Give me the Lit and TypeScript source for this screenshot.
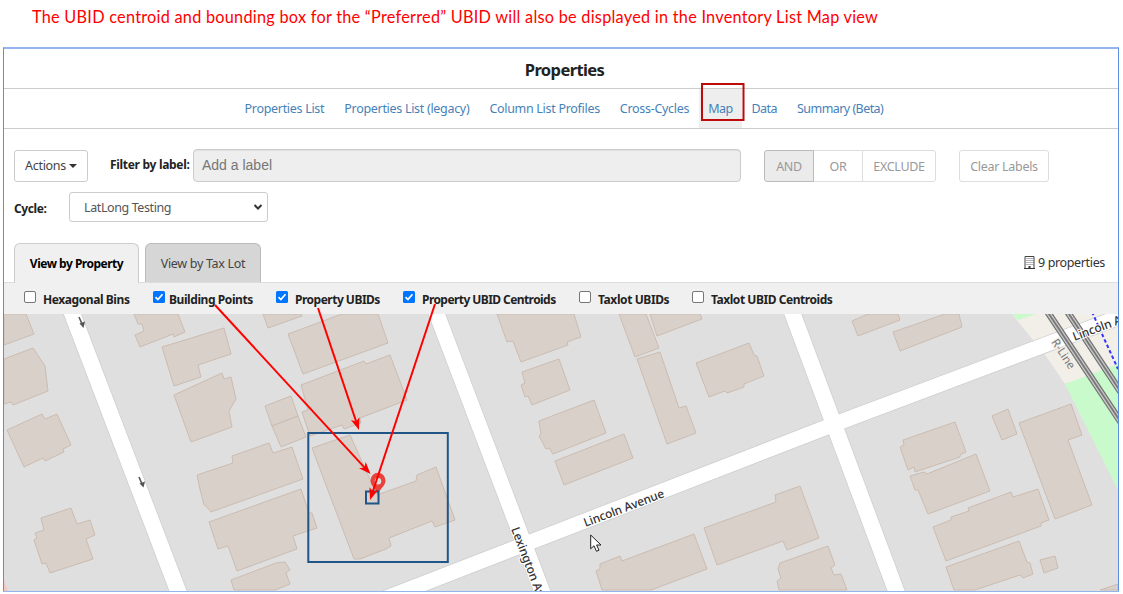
import { LitElement, html, css, svg } from "lit";
import { customElement } from "lit/decorators.js";

const BUILDINGS = [
  "4,345 34,334 26,314 4,314",
  "4,359 33,348 45,366 48,391 13,405 11,402 4,404",
  "7,430 42,414 45,419 57,414 71,445 63,449 64,452 45,461 43,458 24,467",
  "41,518 71,508 77,524 90,520 95,535 86,539 93,559 50,573 46,563 42,564 34,540 37,538 35,533 44,530",
  "134,314 138,324 142,324 144,331 135,335 140,347 173,334 174,337 185,332 178,314",
  "162,347 224,328 231,354 198,365 201,377 174,386",
  "174,395 222,373 224,379 231,377 236,399 229,411 232,427 191,442",
  "263,314 268,328 302,316 301,314",
  "288,334 342,314 378,314 388,343 303,374",
  "265,406 291,396 298,416 272,426",
  "272,426 298,416 306,437 281,447",
  "301,385 364,361 366,364 390,355 407,400 360,418 361,423 344,429 342,425 310,436 302,412 308,410",
  "197,475 233,463 232,456 269,443 273,453 292,447 303,479 211,512 206,506 204,505 199,485",
  "209,522 301,489 309,513 312,513 317,528 293,536 297,549 237,571 228,546 218,549",
  "231,580 276,563 285,562 290,570 286,573 290,584 275,590 234,590",
  "312,448 350,435 377,495 416,481 417,475 436,467 455,520 435,527 432,521 389,538 391,546 386,549 360,559 354,559",
  "497,314 507,342 513,341 521,362 568,345 567,342 581,337 574,314",
  "522,372 559,359 570,390 532,405 528,396 525,397 521,385 525,383",
  "539,421 594,400 606,433 553,454 549,448 546,449 539,436 541,434",
  "555,461 624,434 633,458 564,485",
  "619,314 635,357 659,348 646,314",
  "650,314 657,336 702,319 700,314",
  "637,359 660,352 679,408 686,406 696,433 667,444",
  "696,363 749,343 754,355 757,356 764,376 744,384 744,387 727,393 725,391 709,397",
  "852,321 868,314 898,314 900,320 858,336",
  "893,332 945,314 959,314 962,327 900,351",
  "596,571 600,569 600,564 620,556 622,561 694,534 707,569 651,590 602,590",
  "704,528 776,502 775,495 800,486 819,538 787,550 783,541 717,565",
  "780,563 828,546 835,565 831,568 834,575 841,574 847,590 779,590 777,581 781,578 778,569",
  "903,440 955,422 966,452 960,455 960,457 915,472 914,467 908,470 900,447 904,445",
  "910,476 924,472 927,474 976,454 990,491 928,514 918,490 915,490",
  "992,416 1008,409 1017,434 1002,440",
  "1019,423 1071,404 1082,435 1068,440 1092,505 1055,519",
  "933,527 951,520 951,517 969,511 968,508 1011,492 1013,497 1038,489 1049,520 1041,523 1041,526 946,561",
  "946,567 1019,541 1027,562 1030,563 1033,574 1023,578 1020,575 975,590 954,590",
  "1040,560 1055,556 1058,568 1044,573",
  "1100,590 1118,584 1118,590",
];

const TABS = ["Properties List", "Properties List (legacy)", "Column List Profiles", "Cross-Cycles", "Map", "Data", "Summary (Beta)"];

const LAYERS = [
  { label: "Hexagonal Bins", on: false, cls: "l0" },
  { label: "Building Points", on: true, cls: "l1" },
  { label: "Property UBIDs", on: true, cls: "l2" },
  { label: "Property UBID Centroids", on: true, cls: "l3" },
  { label: "Taxlot UBIDs", on: false, cls: "l4" },
  { label: "Taxlot UBID Centroids", on: false, cls: "l5" },
];

@customElement("street-map")
class StreetMap extends LitElement {
  static styles = css`
    :host { display: block; height: 277px; }
    svg { display: block; width: 1114px; height: 277px; }
    .land { fill: #dfdfdf; }
    .building { fill: #d9d0c9; stroke: #cbbcb1; stroke-width: 1; }
    .casing { fill: none; stroke: #d0d0d0; }
    .road { fill: none; stroke: #fff; }
    .name { font-family: "Noto Sans", sans-serif; font-size: 12px; font-weight: 500; letter-spacing: -0.1px; fill: #333; stroke: #fff; stroke-width: 2px; paint-order: stroke; }
    .line-name { font-family: "Noto Sans", sans-serif; font-size: 11.5px; letter-spacing: 0; fill: #777; stroke: #f2efe9; stroke-width: 2px; paint-order: stroke; }
    .rail { fill: none; stroke: #707070; stroke-width: 6.8; }
    .rail-gap { fill: none; stroke: #c9c9c9; stroke-width: 4.4; }
    .rail-mid { fill: none; stroke: #777; stroke-width: 1.8; }
    .path { fill: none; stroke: #3434ff; stroke-width: 2; stroke-dasharray: 3.5 2.5; }
    .arrow { stroke: #555; stroke-width: 1.6; fill: #555; }
  `;
  render() {
    const roads = [
      ["M67 300L183 604", 16],
      ["M431.500 300L547 604", 15.5],
      ["M787.500 300L901 604", 16],
      ["M376 602L840 422L1130 313", 15],
    ] as const;
    return html`<svg viewBox="4 314 1114 277">
      <rect class="land" x="4" y="314" width="1114" height="277"></rect>
      <path fill="#f2efe9" d="M1012 314H1118V366L1065 384L1046 356Z"></path>
      <path fill="#c8facc" d="M1012 314H1036L1018 320ZM1065 384L1118 364V490Z"></path>
      <path fill="#f5c6c6" d="M4 580L8 591H4Z"></path>
      ${BUILDINGS.map((p) => svg`<polygon class="building" points=${p}></polygon>`)}
      ${roads.map(([d, w]) => svg`<path class="casing" stroke-width=${w + 1.6} d=${d}></path>`)}
      ${roads.map(([d, w]) => svg`<path class="road" stroke-width=${w} d=${d}></path>`)}
      ${["M1043 305L1122 424", "M1063 305L1122 394"].map((d) => svg`<path class="rail" d=${d}></path><path class="rail-gap" d=${d}></path><path class="rail-mid" d=${d}></path>`)}
      <path class="path" d="M1092 312L1118 369"></path>
      <text class="name" transform="translate(585.500 527) rotate(-20.8)" textLength="85" lengthAdjust="spacingAndGlyphs">Lincoln Avenue</text>
      <text class="name" transform="translate(1074.500 341) rotate(-20.5)">Lincoln A</text>
      <text class="name" transform="translate(511 529) rotate(69)">Lexington Av</text>
      <text class="line-name" transform="translate(1051 342) rotate(57)">R-Line</text>
      <g class="arrow"><path d="M79 317L82 324"></path><path stroke="none" d="M79.500 323.500L85 321.500L83.500 328Z"></path>
      <path d="M139 477L142 484"></path><path stroke="none" d="M139.500 483.500L145 481.500L143.500 487.500Z"></path></g>
    </svg>`;
  }
}

@customElement("annotation-layer")
class AnnotationLayer extends LitElement {
  static styles = css`
    :host { display: block; }
    svg { display: block; }
    .bounds { fill: none; stroke: #1f5587; stroke-width: 2; }
    .ray { stroke: #f00; stroke-width: 2; }
    .head { fill: #f00; }
    .mark { fill: none; stroke: #bd0b0b; stroke-width: 2; }
  `;
  render() {
    const rays = [
      [215, 305, 370.500, 474],
      [318, 308, 359, 430],
      [435, 304, 370, 500],
    ];
    return html`<svg width="1123" height="594" viewBox="0 0 1123 594">
      <rect class="mark" x="702" y="84" width="41.500" height="36"></rect>
      <rect class="bounds" x="308.300" y="433" width="139.500" height="129"></rect>
      <path fill="#e8433a" fill-rule="evenodd" d="M378 494.500C376.500 489 370.500 486 370.500 480.500A7.500 7.700 0 0 1 385.500 480.500C385.500 486 379.500 489 378 494.500ZM378 478A3 3 0 1 0 378 484.500A3 3 0 1 0 378 478Z"></path>
      <rect class="bounds" x="366" y="491.500" width="12.500" height="12"></rect>
      ${rays.map(([x1, y1, x2, y2]) => {
        const a = (Math.atan2(y2 - y1, x2 - x1) * 180) / Math.PI;
        return svg`<line class="ray" x1=${x1} y1=${y1} x2=${x2 - 5 * Math.cos((a * Math.PI) / 180)} y2=${y2 - 5 * Math.sin((a * Math.PI) / 180)}></line>
          <path class="head" transform="translate(${x2} ${y2}) rotate(${a})" d="M0 0L-12 -4.500L-9 0L-12 4.500Z"></path>`;
      })}
      <path fill="#fff" stroke="#222" stroke-width="1" d="M590.700 535V548.800L594 545.800L596.500 551.300L599 550.200L596.600 545H601Z"></path>
    </svg>`;
  }
}

@customElement("app-root")
class AppRoot extends LitElement {
  static styles = css`
    * { box-sizing: border-box; }
    :host { display: block; position: relative; width: 1123px; height: 594px; background: #fff; overflow: hidden; font-family: "Noto Sans", sans-serif; font-size: 12.5px; letter-spacing: -0.3px; color: #222; }
    .note { height: 47px; padding: 7px 0 0 32px; margin: 0; font: 16.3px/20px Lato, sans-serif; letter-spacing: 0.25px; color: #f00; white-space: nowrap; }
    .frame { width: 1116px; margin-left: 3px; height: 545px; border: 1px solid #5b8ee0; border-top: 2px solid #93b4ec; border-bottom: 2px solid #93b4ec; }
    h1 { margin: 0; height: 40px; padding: 2px 0 0 7px; border-bottom: 1px solid #ccc; text-align: center; font-size: 16.5px; line-height: 38px; letter-spacing: -0.6px; }
    .tabs { display: flex; height: 40px; border-bottom: 1px solid #ccc; padding-left: 230.5px; }
    .tabs a { color: #4682b8; padding: 0 10px; line-height: 39px; white-space: nowrap; }
    .tabs .current { background: #eee; padding: 0 9px; }
    .tabs .current, .tabs .current ~ a { letter-spacing: -0.55px; }
    .filters { display: flex; align-items: flex-start; padding: 20px 0 0 10px; height: 63px; }
    .btn { height: 32px; border: 1px solid #ddd; border-radius: 3px; background: #fff; color: #444; line-height: 32px; text-align: center; white-space: nowrap; }
    .actions { width: 74px; margin-top: 1px; display: flex; align-items: center; justify-content: center; gap: 3px; border-color: #ccc; }
    .caret { border: 4px solid transparent; border-top-color: #333; border-bottom: 0; }
    .filter-label { width: 103px; padding: 0 0 0 22px; line-height: 31px; font-weight: 700; font-size: 12px; white-space: nowrap; }
    .input { width: 548px; height: 33px; margin-left: 2px; border: 1px solid #ccc; border-radius: 4px; background: #eee; color: #777; font: 14px/31px "Liberation Sans", sans-serif; letter-spacing: 0; padding-left: 8px; box-shadow: inset 0 1px 1px #0001; }
    .group { display: flex; margin: 1px 0 0 23px; color: #999; }
    .group .btn, .clear { color: #999; }
    .group .btn + .btn { margin-left: -1px; }
    .and { width: 50px; background: #ebebeb; border-color: #bbb; border-radius: 3px 0 0 3px; z-index: 1; }
    .or { width: 50px; border-radius: 0; }
    .exclude { width: 74px; border-radius: 0 3px 3px 0; }
    .clear { width: 90px; margin: 1px 0 0 23px; }
    .cycle { display: flex; height: 51px; padding-left: 10px; }
    .cycle-label { width: 55px; font-weight: 700; font-size: 12px; line-height: 34px; letter-spacing: -0.4px; }
    .select { width: 199px; height: 30px; border: 1px solid #ccc; border-radius: 3px; padding: 0 4px 0 14px; line-height: 33px; display: flex; align-items: center; justify-content: space-between; color: #555; letter-spacing: -0.4px; }
    .views { display: flex; height: 39px; padding-left: 10px; }
    .view { height: 39px; border: 1px solid #ccc; border-bottom: 0; border-radius: 6px 6px 0 0; text-align: center; line-height: 39px; }
    .property { width: 125px; background: #f0f0f0; font-weight: 700; font-size: 12px; height: 40px; color: #000; z-index: 1; letter-spacing: -0.5px; }
    .taxlot { width: 116px; margin-left: 6px; background: #d6d6d6; border-color: #bbb; color: #444; }
    .count { flex: 1; display: flex; justify-content: flex-end; align-items: center; gap: 3px; padding-right: 13px; color: #333; letter-spacing: -0.35px; }
    .layers { display: flex; align-items: center; height: 32px; background: #f0f0f0; border-top: 1px solid #ddd; font-weight: 700; font-size: 12px; letter-spacing: -0.5px; }
    .layer { display: flex; align-items: center; white-space: nowrap; gap: 7px; padding-top: 2px; }
    .layer svg { margin-top: -6px; flex: none; }
    .l0 { margin-left: 20px; width: 129px; letter-spacing: -0.42px; }
    .l1 { width: 123px; gap: 4px; letter-spacing: -0.42px; }
    .l2 { width: 127px; }
    .l3 { width: 176px; letter-spacing: -0.57px; }
    .l4 { width: 113px; letter-spacing: -0.4px; }
    .l5 { letter-spacing: -0.45px; }
    .overlay { position: absolute; left: 0; top: 0; }
  `;
  render() {
    return html`
      <p class="note">The UBID centroid and bounding box for the “Preferred” UBID will also be displayed in the Inventory List Map view</p>
      <div class="frame">
        <h1>Properties</h1>
        <nav class="tabs">${TABS.map((t) => html`<a class=${t === "Map" ? "current" : ""}>${t}</a>`)}</nav>
        <div class="filters">
          <div class="btn actions">Actions <span class="caret"></span></div>
          <div class="filter-label">Filter by label:</div>
          <div class="input">Add a label</div>
          <div class="group"><div class="btn and">AND</div><div class="btn or">OR</div><div class="btn exclude">EXCLUDE</div></div>
          <div class="btn clear">Clear Labels</div>
        </div>
        <div class="cycle">
          <div class="cycle-label">Cycle:</div>
          <div class="select">LatLong Testing<svg width="10" height="8" viewBox="0 0 10 8"><path d="M1.500 2L5 5.500L8.500 2" fill="none" stroke="#333" stroke-width="2"></path></svg></div>
        </div>
        <div class="views">
          <div class="view property">View by Property</div>
          <div class="view taxlot">View by Tax Lot</div>
          <div class="count"><svg width="11" height="13" viewBox="0 0 11 13"><path d="M1 .5H10V12.500H1Z" fill="#fff" stroke="#444"></path><path d="M3 2V10M5 2V10M7 2V10M9 2V10" stroke="#667" stroke-dasharray="1 1"></path><path d="M4.500 10H6.500V13H4.500ZM0 12H11V13H0Z" fill="#333"></path></svg>9 properties</div>
        </div>
        <div class="layers">${LAYERS.map((l) => html`<div class="layer ${l.cls}">
          <svg width="12" height="12" viewBox="0 0 12 12">${l.on
            ? svg`<rect width="12" height="12" rx="1.500" fill="#0075ff"></rect><path d="M2.500 6.200L4.900 8.600L9.500 3.200" fill="none" stroke="#fff" stroke-width="1.700"></path>`
            : svg`<rect x=".5" y=".5" width="11" height="11" rx="1.500" fill="#fff" stroke="#767676"></rect>`}</svg>
          ${l.label}</div>`)}</div>
        <street-map></street-map>
      </div>
      <annotation-layer class="overlay"></annotation-layer>`;
  }
}
